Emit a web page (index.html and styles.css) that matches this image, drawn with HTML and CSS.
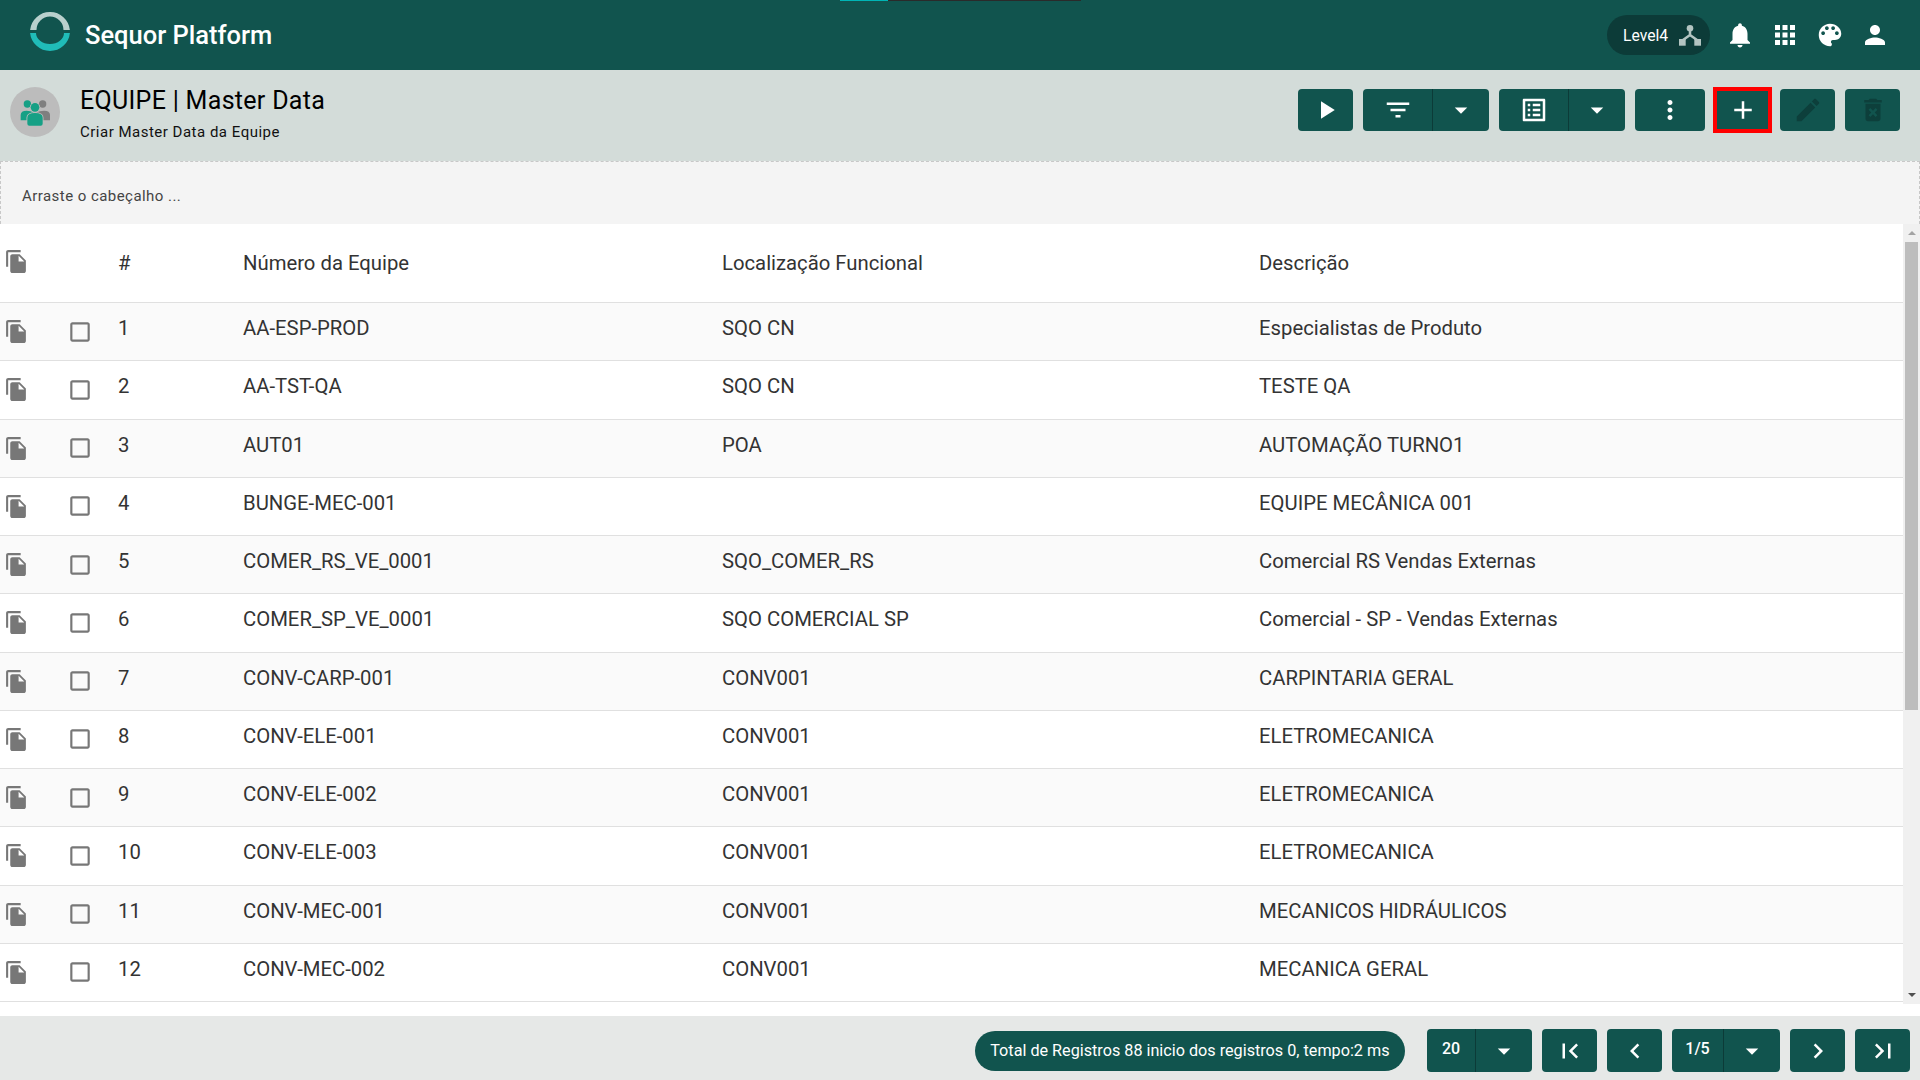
FILE: index.html
```html
<!DOCTYPE html>
<html lang="pt">
<head>
<meta charset="utf-8">
<title>EQUIPE | Master Data</title>
<link rel="stylesheet" href="styles.css">
</head>
<body>
<svg class="defs" width="0" height="0">
	<symbol id="i-copy" viewBox="0 0 24 24"><path d="M16 1H4c-1.1 0-2 .9-2 2v14h2V3h12V1zm-1 4l6 6v10c0 1.1-.9 2-2 2H7.99C6.89 23 6 22.1 6 21l.01-14c0-1.1.89-2 1.99-2h7zm-1 7h5.5L14 6.5V12z"/></symbol>
	<symbol id="i-check" viewBox="0 0 24 24"><path d="M19 5v14H5V5h14m0-2H5c-1.1 0-2 .9-2 2v14c0 1.1.9 2 2 2h14c1.1 0 2-.9 2-2V5c0-1.1-.9-2-2-2z"/></symbol>
	<symbol id="i-drop" viewBox="0 0 24 24"><path d="M7 10l5 5 5-5z"/></symbol>
</svg>

<div class="progress"><i class="progress-on"></i><i class="progress-off"></i></div>

<header class="topbar">
	<svg class="logo" viewBox="0 0 40 40">
		<path class="logo-top" d="M.1 18A20 20 0 0 1 39.9 18H33.500A13.500 13.500 0 0 0 6.500 18Z"/>
		<path class="logo-bottom" d="M.1 21A20 20 0 0 0 39.900 21H34A14 11 0 0 1 6 21Z"/>
	</svg>
	<span class="brand">Sequor Platform</span>
	<div class="topbar-right">
		<div class="level">
			<span>Level4</span>
			<svg class="level-icon" viewBox="0 0 24 24">
				<circle cx="12" cy="5.300" r="3.300"/>
				<path class="level-line" d="M12 7v5M12 12l-7 5M12 12l7 5"/>
				<rect x="1" y="16" width="6.700" height="6.700"/>
				<rect x="16.300" y="16" width="6.700" height="6.700"/>
			</svg>
		</div>
		<svg class="top-icon" viewBox="0 0 24 24"><path d="M12 22c1.100 0 2-.9 2-2h-4c0 1.100.89 2 2 2zm6-6v-5c0-3.070-1.640-5.640-4.500-6.320V4c0-.83-.67-1.500-1.500-1.500s-1.500.67-1.500 1.500v.68C7.630 5.360 6 7.920 6 11v5l-2 2v1h16v-1l-2-2z"/></svg>
		<svg class="top-icon" viewBox="0 0 24 24"><path d="M4 8h4V4H4v4zm6 12h4v-4h-4v4zm-6 0h4v-4H4v4zm0-6h4v-4H4v4zm6 0h4v-4h-4v4zm6-10v4h4V4h-4zm-6 4h4V4h-4v4zm6 6h4v-4h-4v4zm0 6h4v-4h-4v4z"/></svg>
		<svg class="top-icon" viewBox="0 0 24 24"><path d="M12 3c-4.970 0-9 4.030-9 9s4.030 9 9 9c.83 0 1.500-.67 1.500-1.500 0-.39-.15-.74-.39-1.010-.23-.26-.38-.61-.38-.99 0-.83.67-1.500 1.500-1.500H16c2.760 0 5-2.240 5-5 0-4.420-4.030-8-9-8zm-5.500 9c-.83 0-1.500-.67-1.500-1.500S5.670 9 6.500 9 8 9.670 8 10.500 7.330 12 6.500 12zm3-4C8.670 8 8 7.330 8 6.500S8.670 5 9.500 5s1.500.67 1.500 1.500S10.330 8 9.500 8zm5 0c-.83 0-1.500-.67-1.500-1.500S13.670 5 14.500 5s1.500.67 1.500 1.500S15.330 8 14.500 8zm3 4c-.83 0-1.500-.67-1.500-1.500S16.670 9 17.500 9s1.500.67 1.500 1.500-.67 1.500-1.500 1.500z"/></svg>
		<svg class="top-icon" viewBox="0 0 24 24"><path d="M12 12c2.210 0 4-1.790 4-4s-1.790-4-4-4-4 1.790-4 4 1.790 4 4 4zm0 2c-2.670 0-8 1.340-8 4v2h16v-2c0-2.660-5.330-4-8-4z"/></svg>
	</div>
</header>

<section class="subheader">
	<div class="avatar">
		<svg viewBox="0 0 150 150">
			<circle class="teal" cx="52" cy="51" r="11"/>
			<path class="teal" d="M32 100V84Q32 71 50 71Q62 71 70 76V100Z"/>
			<circle class="grey" cx="98" cy="51" r="11"/>
			<path class="grey" d="M120 100V84Q120 71 102 71Q88 71 80 76V100Z"/>
			<circle class="teal gap" cx="75" cy="61" r="13"/>
			<path class="teal gap" d="M52 116V92Q52 78 75 78Q98 78 98 92V110Q98 116 92 116H58Q52 116 52 110Z"/>
		</svg>
	</div>
	<div class="titles">
		<h1>EQUIPE | Master Data</h1>
		<p>Criar Master Data da Equipe</p>
	</div>
	<div class="toolbar">
		<button class="btn"><svg viewBox="0 0 24 24"><path d="M8 5v14l11-7z"/></svg></button>
		<div class="group">
			<button class="btn wide"><svg viewBox="0 0 24 24"><path d="M10 18h4v-2h-4v2zM3 6v2h18V6H3zm3 7h12v-2H6v2z"/></svg></button>
			<button class="btn"><svg viewBox="0 0 24 24"><use href="#i-drop"/></svg></button>
		</div>
		<div class="group">
			<button class="btn wide"><svg viewBox="0 0 24 24"><path d="M19 5v14H5V5h14m1.100-2H3.900c-.5 0-.9.4-.9.9v16.200c0 .4.4.9.9.9h16.200c.4 0 .9-.5.9-.9V3.900c0-.5-.5-.9-.9-.9zM11 7h6v2h-6V7zm0 4h6v2h-6v-2zm0 4h6v2h-6zM7 7h2v2H7zm0 4h2v2H7zm0 4h2v2H7z"/></svg></button>
			<button class="btn"><svg viewBox="0 0 24 24"><use href="#i-drop"/></svg></button>
		</div>
		<button class="btn dots"><svg viewBox="0 0 24 24"><path d="M12 8c1.100 0 2-.9 2-2s-.9-2-2-2-2 .9-2 2 .9 2 2 2zm0 2c-1.100 0-2 .9-2 2s.9 2 2 2 2-.9 2-2-.9-2-2-2zm0 6c-1.100 0-2 .9-2 2s.9 2 2 2 2-.9 2-2-.9-2-2-2z"/></svg></button>
		<button class="btn marked"><svg viewBox="0 0 24 24"><path d="M19 13h-6v6h-2v-6H5v-2h6V5h2v6h6v2z"/></svg></button>
		<button class="btn off"><svg viewBox="0 0 24 24"><path d="M3 17.250V21h3.750L17.810 9.940l-3.750-3.750L3 17.250zM20.710 7.040c.39-.39.39-1.020 0-1.410l-2.340-2.340c-.39-.39-1.020-.39-1.410 0l-1.830 1.830 3.750 3.750 1.830-1.830z"/></svg></button>
		<button class="btn off"><svg viewBox="0 0 24 24"><path d="M6 19c0 1.100.9 2 2 2h8c1.100 0 2-.9 2-2V7H6v12zm2.460-7.120l1.410-1.410L12 12.590l2.120-2.120 1.410 1.410L13.410 14l2.120 2.120-1.410 1.410L12 15.410l-2.120 2.120-1.410-1.410L10.590 14l-2.130-2.120zM15.500 4l-1-1h-5l-1 1H5v2h14V4z"/></svg></button>
	</div>
</section>

<div class="dropzone">Arraste o cabeçalho ...</div>

<main class="grid-wrap">
	<div class="grid">
		<div class="row head">
			<svg class="copy"><use href="#i-copy"/></svg><span></span><span>#</span><span>Número da Equipe</span><span>Localização Funcional</span><span>Descrição</span>
		</div>
		<div class="row">
			<svg class="copy"><use href="#i-copy"/></svg><svg class="check"><use href="#i-check"/></svg><span>1</span><span>AA-ESP-PROD</span><span>SQO CN</span><span>Especialistas de Produto</span>
		</div>
		<div class="row">
			<svg class="copy"><use href="#i-copy"/></svg><svg class="check"><use href="#i-check"/></svg><span>2</span><span>AA-TST-QA</span><span>SQO CN</span><span>TESTE QA</span>
		</div>
		<div class="row">
			<svg class="copy"><use href="#i-copy"/></svg><svg class="check"><use href="#i-check"/></svg><span>3</span><span>AUT01</span><span>POA</span><span>AUTOMAÇÃO TURNO1</span>
		</div>
		<div class="row">
			<svg class="copy"><use href="#i-copy"/></svg><svg class="check"><use href="#i-check"/></svg><span>4</span><span>BUNGE-MEC-001</span><span></span><span>EQUIPE MECÂNICA 001</span>
		</div>
		<div class="row">
			<svg class="copy"><use href="#i-copy"/></svg><svg class="check"><use href="#i-check"/></svg><span>5</span><span>COMER_RS_VE_0001</span><span>SQO_COMER_RS</span><span>Comercial RS Vendas Externas</span>
		</div>
		<div class="row">
			<svg class="copy"><use href="#i-copy"/></svg><svg class="check"><use href="#i-check"/></svg><span>6</span><span>COMER_SP_VE_0001</span><span>SQO COMERCIAL SP</span><span>Comercial - SP - Vendas Externas</span>
		</div>
		<div class="row">
			<svg class="copy"><use href="#i-copy"/></svg><svg class="check"><use href="#i-check"/></svg><span>7</span><span>CONV-CARP-001</span><span>CONV001</span><span>CARPINTARIA GERAL</span>
		</div>
		<div class="row">
			<svg class="copy"><use href="#i-copy"/></svg><svg class="check"><use href="#i-check"/></svg><span>8</span><span>CONV-ELE-001</span><span>CONV001</span><span>ELETROMECANICA</span>
		</div>
		<div class="row">
			<svg class="copy"><use href="#i-copy"/></svg><svg class="check"><use href="#i-check"/></svg><span>9</span><span>CONV-ELE-002</span><span>CONV001</span><span>ELETROMECANICA</span>
		</div>
		<div class="row">
			<svg class="copy"><use href="#i-copy"/></svg><svg class="check"><use href="#i-check"/></svg><span>10</span><span>CONV-ELE-003</span><span>CONV001</span><span>ELETROMECANICA</span>
		</div>
		<div class="row">
			<svg class="copy"><use href="#i-copy"/></svg><svg class="check"><use href="#i-check"/></svg><span>11</span><span>CONV-MEC-001</span><span>CONV001</span><span>MECANICOS HIDRÁULICOS</span>
		</div>
		<div class="row">
			<svg class="copy"><use href="#i-copy"/></svg><svg class="check"><use href="#i-check"/></svg><span>12</span><span>CONV-MEC-002</span><span>CONV001</span><span>MECANICA GERAL</span>
		</div>
	</div>
	<div class="scrollbar">
		<i class="arrow up"></i>
		<div class="track"><div class="thumb"></div></div>
		<i class="arrow down"></i>
	</div>
</main>

<footer class="footer">
	<div class="total">Total de Registros 88 inicio dos registros 0, tempo:2 ms</div>
	<div class="group size">
		<button class="btn num">20</button>
		<button class="btn"><svg viewBox="0 0 24 24"><use href="#i-drop"/></svg></button>
	</div>
	<button class="btn"><svg viewBox="0 0 24 24"><path d="M18.410 16.590L13.820 12l4.590-4.590L17 6l-6 6 6 6zM6 6h2v12H6z"/></svg></button>
	<button class="btn"><svg viewBox="0 0 24 24"><path d="M15.410 7.410L14 6l-6 6 6 6 1.410-1.410L10.830 12z"/></svg></button>
	<div class="group">
		<button class="btn num">1/5</button>
		<button class="btn"><svg viewBox="0 0 24 24"><use href="#i-drop"/></svg></button>
	</div>
	<button class="btn"><svg viewBox="0 0 24 24"><path d="M10 6L8.590 7.410 13.170 12l-4.580 4.590L10 18l6-6z"/></svg></button>
	<button class="btn"><svg viewBox="0 0 24 24"><path d="M5.590 7.410L10.180 12l-4.590 4.590L7 18l6-6-6-6zM16 6h2v12h-2z"/></svg></button>
</footer>
</body>
</html>
```

FILE: styles.css
```css
*{box-sizing: border-box;}
html, body{
	margin: 0;
	height: 100%;
	overflow: hidden;
}
body{
	display: flex;
	flex-direction: column;
	font-family: 'Roboto', sans-serif;
	color: #333;
	background: #fff;
}
.defs{position: absolute;}

/* loading line on the very top */
.progress{
	position: absolute;
	top: 0;
	left: 840px;
	display: flex;
	height: 1px;
}
.progress i{display: block; height: 1px;}
.progress-on{width: 48px; background: #00b5b5;}
.progress-off{width: 193px; background: #2a2a2a;}

.topbar{
	flex: none;
	display: flex;
	align-items: center;
	height: 70px;
	background: #11544e;
	color: #fff;
}
.logo{
	width: 40px;
	height: 40px;
	margin: -6px 0 0 30px;
}
.logo-top{fill: #b9d0cd;}
.logo-bottom{fill: #20bcb8;}
.brand{
	margin-left: 15px;
	font-size: 25.500px;
	font-weight: 500;
}
.topbar-right{
	display: flex;
	align-items: center;
	gap: 15px;
	margin-left: auto;
	padding-right: 30px;
}
.level{
	display: flex;
	align-items: center;
	justify-content: space-between;
	width: 103px;
	height: 40px;
	padding: 0 8px 0 16px;
	border-radius: 20px;
	background: #0c3b38;
	font-size: 15.700px;
}
.level-icon{width: 24px; height: 24px; fill: #b3c4c1;}
.level-line{fill: none; stroke: #b3c4c1; stroke-width: 2.500;}
.top-icon{
	width: 30px;
	height: 30px;
	fill: #fff;
}

.subheader{
	flex: none;
	display: flex;
	align-items: flex-start;
	height: 91px;
	padding: 17px 20px 0 10px;
	background: #d3dcd9;
}
.avatar{
	flex: none;
	width: 50px;
	height: 50px;
	margin-right: 20px;
	border-radius: 50%;
	background: #bcbcbc;
}
.avatar svg{display: block; width: 50px; height: 50px;}
.avatar .teal{fill: #16a085;}
.avatar .grey{fill: #7f7f7f;}
.avatar .gap{stroke: #bcbcbc; stroke-width: 5; paint-order: stroke;}
.titles h1{
	margin: 0;
	font-size: 25px;
	font-weight: 400;
	line-height: 28px;
	color: #000;
	letter-spacing: .3px;
}
.titles p{
	margin: 8px 0 0;
	font-size: 15px;
	line-height: 18px;
	color: #111;
	letter-spacing: .5px;
}
.toolbar{
	display: flex;
	gap: 10px;
	margin-left: auto;
	padding-top: 2px;
}
.btn{
	display: flex;
	align-items: center;
	justify-content: center;
	width: 55px;
	height: 42px;
	padding: 0;
	border: 0;
	border-radius: 4px;
	background: #11544e;
	color: #fff;
	font-family: inherit;
	font-size: 16px;
	font-weight: 500;
}
.btn svg{width: 30px; height: 30px; fill: #fff;}
.btn.wide{width: 70px;}
.btn.dots{width: 70px;}
.btn.marked{
	border-radius: 0;
	outline: 4px solid #f00;
	outline-offset: -2px;
}
.btn.off svg{fill: #0d3f3b;}
.group{display: flex;}
.group .btn{border-radius: 0 4px 4px 0; width: 56px;}
.group .btn:first-child{
	border-radius: 4px 0 0 4px;
	border-right: 1px solid #0c3b38;
}
.group .btn.wide{width: 70px;}

.dropzone{
	flex: none;
	height: 63px;
	padding: 25px 21px 0;
	border: 1px dashed #c8c8c8;
	border-width: 1px 1px 0;
	background: #f4f4f4;
	font-size: 15px;
	letter-spacing: .45px;
	line-height: 18px;
	color: #444;
}

.grid-wrap{
	flex: none;
	display: flex;
	height: 780px;
}
.grid{flex: 1;}
.row{
	display: grid;
	grid-template-columns: 70px 48px 125px 479px 537px 1fr;
	align-items: center;
	height: 58.250px;
	border-bottom: 1px solid #e0e0e0;
	font-size: 20.300px;
	color: #333;
}
.row:nth-child(2n){background: #fafafa;}
.row span{padding-bottom: 7px;}
.row.head{height: 79px; background: #fff;}
.row.head span{padding-bottom: 1px;}
.copy{
	width: 25px;
	height: 25px;
	margin-left: 4px;
	fill: #777;
}
.head .copy{margin-top: -4px;}
.check{width: 26px; height: 26px; margin-left: -3px; fill: #777;}

.scrollbar{
	flex: none;
	display: flex;
	flex-direction: column;
	align-items: center;
	width: 17px;
	background: #f0f0f0;
}
.arrow{
	flex: none;
	width: 0;
	height: 0;
	margin: 7px 0;
	border-left: 4px solid transparent;
	border-right: 4px solid transparent;
}
.arrow.up{border-bottom: 4px solid #a3a3a3;}
.arrow.down{border-top: 4px solid #505050;}
.track{flex: 1; width: 13px;}
.thumb{height: 468px; background: #bdbdbd;}

.footer{
	flex: none;
	display: flex;
	align-items: center;
	justify-content: flex-end;
	gap: 10px;
	height: 64px;
	margin-top: 12px;
	padding: 5px 10px 0 0;
	background: #e6e8e7;
}
.total{
	display: flex;
	align-items: center;
	height: 40px;
	margin-right: 12px;
	padding: 0 15.500px;
	border-radius: 20px;
	background: #11544e;
	color: #fff;
	font-size: 16.200px;
}
.footer .btn{width: 55px; height: 43px;}
.footer .group .btn{width: 56px;}
.footer .group .btn.num{width: 52px; padding-bottom: 4px;}
.footer .size .btn.num{width: 49px;}
```
